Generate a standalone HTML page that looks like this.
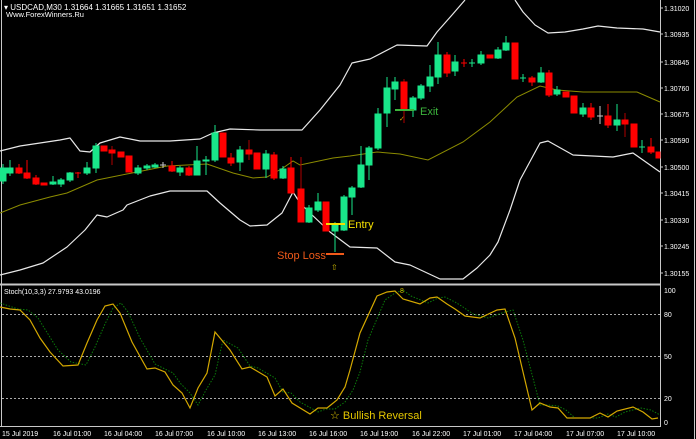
<!DOCTYPE html>
<html><head><meta charset="utf-8"><style>
html,body{margin:0;padding:0;background:#000;width:696px;height:439px;overflow:hidden}
svg{display:block}
text{font-family:"Liberation Sans",sans-serif}
</style></head><body>
<svg width="696" height="439" viewBox="0 0 696 439" xmlns="http://www.w3.org/2000/svg">
<rect width="696" height="439" fill="#000"/>
<line x1="1.5" y1="0" x2="1.5" y2="427" stroke="#c8c8c8" stroke-width="1"/>
<line x1="660.5" y1="0" x2="660.5" y2="427" stroke="#c8c8c8" stroke-width="1"/>
<line x1="694.5" y1="0" x2="694.5" y2="439" stroke="#c8c8c8" stroke-width="1"/>
<line x1="0" y1="284.5" x2="661" y2="284.5" stroke="#c8c8c8" stroke-width="2"/>
<line x1="0" y1="426.5" x2="661" y2="426.5" stroke="#c8c8c8" stroke-width="1"/>
<text x="4" y="10" fill="#fff" font-size="8">▾ USDCAD,M30  1.31664 1.31665 1.31651 1.31652</text>
<text x="6" y="17" fill="#fff" font-size="7.5">Www.ForexWinners.Ru</text>
<g fill="#fff" font-size="7">
<text x="664" y="11">1.31020</text><text x="664" y="37">1.30935</text><text x="664" y="65">1.30845</text>
<text x="664" y="91">1.30760</text><text x="664" y="117">1.30675</text><text x="664" y="143">1.30590</text>
<text x="664" y="170">1.30500</text><text x="664" y="196">1.30415</text><text x="664" y="223">1.30330</text>
<text x="664" y="249">1.30245</text><text x="664" y="276">1.30155</text>
<text x="664" y="293">100</text><text x="664" y="317">80</text><text x="664" y="359">50</text>
<text x="664" y="401">20</text><text x="664" y="425">0</text>
</g>
<g stroke="#c8c8c8"><line x1="660" y1="8" x2="663" y2="8"/><line x1="660" y1="34" x2="663" y2="34"/><line x1="660" y1="62" x2="663" y2="62"/><line x1="660" y1="88" x2="663" y2="88"/><line x1="660" y1="114" x2="663" y2="114"/><line x1="660" y1="140" x2="663" y2="140"/><line x1="660" y1="167" x2="663" y2="167"/><line x1="660" y1="193" x2="663" y2="193"/><line x1="660" y1="220" x2="663" y2="220"/><line x1="660" y1="246" x2="663" y2="246"/><line x1="660" y1="273" x2="663" y2="273"/></g>
<g fill="#fff" font-size="7">
<text x="2" y="436">15 Jul 2019</text><text x="53" y="436">16 Jul 01:00</text><text x="104" y="436">16 Jul 04:00</text>
<text x="155" y="436">16 Jul 07:00</text><text x="207" y="436">16 Jul 10:00</text><text x="258" y="436">16 Jul 13:00</text>
<text x="309" y="436">16 Jul 16:00</text><text x="360" y="436">16 Jul 19:00</text><text x="412" y="436">16 Jul 22:00</text>
<text x="463" y="436">17 Jul 01:00</text><text x="514" y="436">17 Jul 04:00</text><text x="566" y="436">17 Jul 07:00</text>
<text x="617" y="436">17 Jul 10:00</text>
</g>
<polyline fill="none" stroke="#e8e8e8" stroke-width="1.2" stroke-linejoin="round" points="0,151 20,146 40,143 60,140 70,138 80,151 90,152 100,143 120,137 140,141 170,141 200,139 213,133 230,129 260,130 302,130 320,110 340,85 352,63 370,59 397,45 427,46 437,32 452,15 465,0"/>
<polyline fill="none" stroke="#e8e8e8" stroke-width="1.2" stroke-linejoin="round" points="515,0 523,12 535,25 548,33 565,32 583,29 598,26 617,28 643,29 660,32"/>
<polyline fill="none" stroke="#8c8c00" stroke-width="1" points="0,213 20,205 50,197 67,193 97,180 137,172 167,166 207,164 233,173 253,178 267,177 283,168 293,161 300,165 333,158 350,156 377,152 400,154 428,160 463,142 490,122 517,97 540,86 557,90 583,92 637,92 660,102"/>
<polyline fill="none" stroke="#e8e8e8" stroke-width="1.2" stroke-linejoin="round" points="0,275 20,270 43,263 67,247 85,230 97,215 107,217 123,210 127,205 150,196 170,191 207,191 220,203 240,220 250,226 267,225 282,213 293,192 300,203 310,213 330,232 350,247 377,248 395,262 410,265 440,279 463,279 477,268 490,255 498,242 510,210 520,180 540,143 548,141 573,155 613,157 633,153 660,172"/>
<g stroke-width="1">
<g stroke="#19e68a" fill="#19e68a">
<line x1="3" y1="164" x2="3" y2="184"/><rect x="0" y="168" width="6" height="13"/>
<line x1="10" y1="160" x2="10" y2="176"/><rect x="7" y="168" width="6" height="5"/>
<line x1="53" y1="176" x2="53" y2="185"/><rect x="50" y="182" width="6" height="2"/>
<line x1="61" y1="178" x2="61" y2="187"/><rect x="58" y="180" width="6" height="4"/>
<line x1="70" y1="172" x2="70" y2="182"/><rect x="67" y="173" width="6" height="7"/>
<line x1="87" y1="162" x2="87" y2="175"/><rect x="84" y="168" width="6" height="5"/>
<line x1="96" y1="143" x2="96" y2="173"/><rect x="93" y="146" width="6" height="22"/>
<line x1="138" y1="165" x2="138" y2="175"/><rect x="135" y="168" width="6" height="5"/>
<line x1="147" y1="164" x2="147" y2="170"/><rect x="144" y="166" width="6" height="2"/>
<line x1="155" y1="163" x2="155" y2="168"/><rect x="152" y="165" width="6" height="2"/>
<line x1="180" y1="166" x2="180" y2="176"/><rect x="177" y="168" width="6" height="4"/>
<line x1="197" y1="146" x2="197" y2="175"/><rect x="194" y="161" width="6" height="14"/>
<line x1="206" y1="156" x2="206" y2="175"/><rect x="203" y="160" width="6" height="1"/>
<line x1="215" y1="125" x2="215" y2="162"/><rect x="212" y="133" width="6" height="27"/>
<line x1="240" y1="146" x2="240" y2="171"/><rect x="237" y="150" width="6" height="12"/>
<line x1="266" y1="150" x2="266" y2="178"/><rect x="263" y="154" width="6" height="15"/>
<line x1="283" y1="166" x2="283" y2="179"/><rect x="280" y="169" width="6" height="9"/>
<line x1="309" y1="205" x2="309" y2="223"/><rect x="306" y="208" width="6" height="14"/>
<line x1="318" y1="193" x2="318" y2="212"/><rect x="315" y="202" width="6" height="8"/>
<line x1="335" y1="222" x2="335" y2="252"/><rect x="332" y="224" width="6" height="7"/>
<line x1="344" y1="195" x2="344" y2="231"/><rect x="341" y="197" width="6" height="33"/>
<line x1="352" y1="186" x2="352" y2="215"/><rect x="349" y="188" width="6" height="9"/>
<line x1="361" y1="146" x2="361" y2="188"/><rect x="358" y="165" width="6" height="22"/>
<line x1="369" y1="146" x2="369" y2="180"/><rect x="366" y="148" width="6" height="17"/>
<line x1="378" y1="108" x2="378" y2="150"/><rect x="375" y="114" width="6" height="34"/>
<line x1="387" y1="77" x2="387" y2="127"/><rect x="384" y="88" width="6" height="25"/>
<line x1="395" y1="77" x2="395" y2="100"/><rect x="392" y="82" width="6" height="7"/>
<line x1="413" y1="96" x2="413" y2="117"/><rect x="410" y="98" width="6" height="12"/>
<line x1="421" y1="84" x2="421" y2="100"/><rect x="418" y="86" width="6" height="12"/>
<line x1="430" y1="65" x2="430" y2="92"/><rect x="427" y="77" width="6" height="9"/>
<line x1="438" y1="42" x2="438" y2="84"/><rect x="435" y="55" width="6" height="22"/>
<line x1="455" y1="55" x2="455" y2="76"/><rect x="452" y="62" width="6" height="9"/>
<line x1="472" y1="59" x2="472" y2="67"/><line x1="469" y1="63" x2="475" y2="63"/>
<line x1="481" y1="51" x2="481" y2="65"/><rect x="478" y="55" width="6" height="8"/>
<line x1="498" y1="47" x2="498" y2="59"/><rect x="495" y="50" width="6" height="8"/>
<line x1="506" y1="36" x2="506" y2="51"/><rect x="503" y="43" width="6" height="7"/>
<line x1="523" y1="74" x2="523" y2="82"/><line x1="520" y1="78" x2="526" y2="78"/>
<line x1="541" y1="67" x2="541" y2="83"/><rect x="538" y="73" width="6" height="9"/>
<line x1="557" y1="86" x2="557" y2="96"/><rect x="554" y="90" width="6" height="4"/>
<line x1="583" y1="103" x2="583" y2="117"/><rect x="580" y="108" width="6" height="6"/>
<line x1="617" y1="104" x2="617" y2="131"/><rect x="614" y="120" width="6" height="5"/>
<line x1="642" y1="140" x2="642" y2="153"/><line x1="639" y1="147" x2="645" y2="147"/>
</g>
<g stroke="#ff0000" fill="#ff0000">
<line x1="19" y1="164" x2="19" y2="174"/><rect x="16" y="168" width="6" height="5"/>
<line x1="27" y1="160" x2="27" y2="179"/><rect x="24" y="173" width="6" height="5"/>
<line x1="36" y1="175" x2="36" y2="185"/><rect x="33" y="178" width="6" height="6"/>
<rect x="41" y="183" width="6" height="2"/>
<line x1="78" y1="172" x2="78" y2="178"/><line x1="75" y1="173" x2="81" y2="173"/>
<rect x="101" y="146" width="6" height="5"/>
<line x1="112" y1="146" x2="112" y2="165" stroke="#b00000"/><rect x="109" y="150" width="6" height="3"/>
<rect x="118" y="152" width="6" height="5"/>
<rect x="126" y="156" width="6" height="16"/>
<line x1="172" y1="161" x2="172" y2="172"/><rect x="169" y="166" width="6" height="5"/>
<line x1="189" y1="166" x2="189" y2="176"/><rect x="186" y="168" width="6" height="7"/>
<rect x="220" y="133" width="6" height="24"/>
<line x1="231" y1="153" x2="231" y2="166"/><rect x="228" y="158" width="6" height="5"/>
<line x1="249" y1="140" x2="249" y2="160" stroke="#b00000"/><rect x="246" y="150" width="6" height="4"/>
<rect x="254" y="153" width="6" height="16"/>
<line x1="274" y1="152" x2="274" y2="180"/><rect x="271" y="155" width="6" height="23"/>
<line x1="291" y1="157" x2="291" y2="193"/><rect x="288" y="168" width="6" height="25"/>
<line x1="301" y1="157" x2="301" y2="222" stroke="#b00000"/><rect x="298" y="189" width="6" height="33"/>
<rect x="323" y="202" width="6" height="29"/>
<line x1="404" y1="79" x2="404" y2="123" stroke="#b00000"/><rect x="401" y="82" width="6" height="28"/>
<line x1="447" y1="52" x2="447" y2="77"/><rect x="444" y="55" width="6" height="18"/>
<line x1="464" y1="59" x2="464" y2="67"/><line x1="461" y1="63" x2="467" y2="63"/>
<rect x="487" y="55" width="6" height="3"/>
<rect x="512" y="43" width="6" height="36"/>
<line x1="532" y1="76" x2="532" y2="86"/><rect x="529" y="78" width="6" height="4"/>
<line x1="549" y1="70" x2="549" y2="97"/><rect x="546" y="73" width="6" height="22"/>
<rect x="563" y="92" width="6" height="5"/>
<rect x="571" y="96" width="6" height="17"/>
<line x1="591" y1="103" x2="591" y2="120"/><rect x="588" y="108" width="6" height="9"/>
<line x1="608" y1="104" x2="608" y2="128"/><rect x="605" y="116" width="6" height="9"/>
<line x1="625" y1="113" x2="625" y2="137" stroke="#b00000"/><rect x="622" y="120" width="6" height="4"/>
<rect x="631" y="124" width="6" height="23"/>
<line x1="651" y1="138" x2="651" y2="154"/><rect x="648" y="147" width="6" height="5"/>
<rect x="656" y="152" width="4" height="6"/>
</g>
<g stroke="#c8c8c8"><line x1="163" y1="162" x2="163" y2="168"/><line x1="160" y1="165" x2="166" y2="165"/><line x1="600" y1="106" x2="600" y2="124"/><line x1="597" y1="116" x2="603" y2="116"/></g>
</g>
<line x1="326" y1="224" x2="345" y2="224" stroke="#f5e000" stroke-width="2"/>
<text x="348" y="228" fill="#f5e000" font-size="11">Entry</text>
<line x1="326" y1="254" x2="344" y2="254" stroke="#f05a1a" stroke-width="2"/>
<text x="277" y="259" fill="#f05a1a" font-size="11">Stop Loss</text>
<text x="331" y="270" fill="#c8b400" font-size="8">⇧</text>
<line x1="395" y1="110" x2="414" y2="110" stroke="#3cb43c" stroke-width="2"/>
<text x="420" y="115" fill="#3cb43c" font-size="11">Exit</text>
<text x="399" y="121" fill="#d8a000" font-size="7">✓</text>
<text x="4" y="294" fill="#fff" font-size="7">Stoch(10,3,3) 27.9793 43.0196</text>
<g stroke="#aaaaaa" stroke-dasharray="2,2" stroke-width="1">
<line x1="2" y1="314.5" x2="660" y2="314.5"/><line x1="2" y1="356.5" x2="660" y2="356.5"/><line x1="2" y1="398.5" x2="660" y2="398.5"/>
</g>
<polyline fill="none" stroke="#0a7a0a" stroke-width="1" stroke-dasharray="1.5,1.5" points="0,303 18,309 28,310 38,318 48,334 58,350 71,362 86,365 95,347 105,324 113,308 121,303 128,312 140,338 155,364 163,368 173,373 181,384 190,393 198,405 206,390 215,375 223,340 238,348 250,366 258,368 275,378 283,392 291,393 300,402 318,412 326,409 335,409 345,402 353,390 360,372 368,340 385,300 395,293 403,290 411,296 428,303 438,298 445,297 455,302 463,307 473,314 488,318 505,312 513,310 523,340 540,405 548,405 558,406 566,410 575,418 598,418 608,414 616,417 625,412 641,408 651,410 660,415"/>
<polyline fill="none" stroke="#d4a800" stroke-width="1.2" points="0,307 10,309 20,310 30,320 40,338 50,352 63,366 78,365 87,343 97,320 105,306 113,304 120,313 132,342 147,369 155,368 165,372 173,385 182,393 190,408 198,388 207,373 215,332 230,350 242,369 250,367 267,377 275,396 283,389 292,403 310,414 318,408 327,408 337,400 345,387 350,370 360,333 377,296 387,292 395,291 403,299 420,304 430,298 437,297 447,304 455,309 465,316 480,318 497,310 505,309 515,338 532,410 540,403 550,407 558,408 567,418 590,418 600,413 608,417 617,411 633,407 643,412 652,419 658,418"/>
<text x="400" y="293" fill="#d4c000" font-size="7">8</text>
<text x="330" y="419" fill="#e6c800" font-size="11">☆ Bullish Reversal</text>
</svg>
</body></html>
